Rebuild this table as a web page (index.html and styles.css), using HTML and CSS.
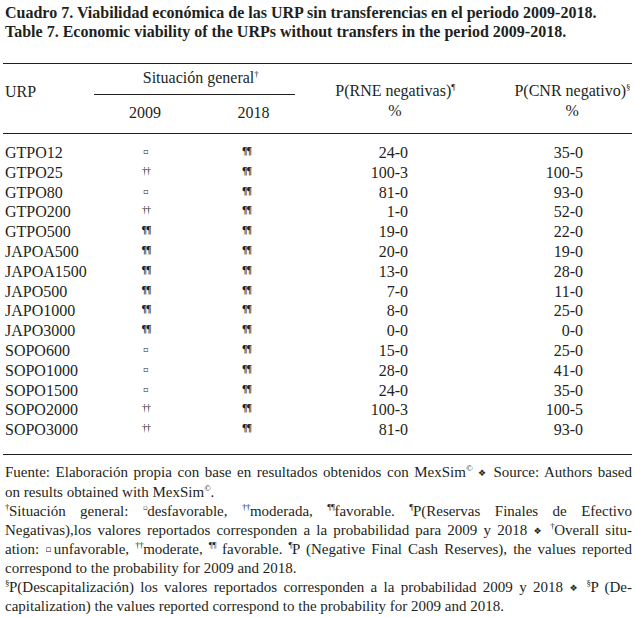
FILE: index.html
```html
<!DOCTYPE html>
<html lang="es">
<head>
<meta charset="utf-8">
<title>Cuadro 7</title>
<link rel="stylesheet" href="styles.css">
</head>
<body>
<div class="page">
  <div class="caption">
    <div>Cuadro 7. Viabilidad económica de las URP sin transferencias en el periodo 2009-2018.</div>
    <div>Table 7. Economic viability of the URPs without transfers in the period 2009-2018.</div>
  </div>

  <table class="data">
    <colgroup>
      <col class="c-urp"><col class="c-y1"><col class="c-y2"><col class="c-rne"><col class="c-cnr">
    </colgroup>
    <thead>
      <tr>
        <th class="h-urp" rowspan="2">URP</th>
        <th class="h-sit" colspan="2"><div class="sit">Situación general<sup class="fn">†</sup></div></th>
        <th class="h-p h-rne" rowspan="2"><div class="pblock"><div>P(RNE negativas)<sup class="fn">¶</sup></div><div class="pct">%</div></div></th>
        <th class="h-p h-cnr" rowspan="2"><div class="pblock"><div>P(CNR negativo)<sup class="fn">§</sup></div><div class="pct">%</div></div></th>
      </tr>
      <tr>
        <th class="h-year">2009</th>
        <th class="h-year">2018</th>
      </tr>
    </thead>
    <tbody>
      <tr><td>GTPO12</td><td class="sym"><span class="sq">▫</span></td><td class="sym"><span class="pil">¶¶</span></td><td class="num n-rne">24-0</td><td class="num n-cnr">35-0</td></tr>
      <tr><td>GTPO25</td><td class="sym"><span class="dag">††</span></td><td class="sym"><span class="pil">¶¶</span></td><td class="num n-rne">100-3</td><td class="num n-cnr">100-5</td></tr>
      <tr><td>GTPO80</td><td class="sym"><span class="sq">▫</span></td><td class="sym"><span class="pil">¶¶</span></td><td class="num n-rne">81-0</td><td class="num n-cnr">93-0</td></tr>
      <tr><td>GTPO200</td><td class="sym"><span class="dag">††</span></td><td class="sym"><span class="pil">¶¶</span></td><td class="num n-rne">1-0</td><td class="num n-cnr">52-0</td></tr>
      <tr><td>GTPO500</td><td class="sym"><span class="pil">¶¶</span></td><td class="sym"><span class="pil">¶¶</span></td><td class="num n-rne">19-0</td><td class="num n-cnr">22-0</td></tr>
      <tr><td>JAPOA500</td><td class="sym"><span class="pil">¶¶</span></td><td class="sym"><span class="pil">¶¶</span></td><td class="num n-rne">20-0</td><td class="num n-cnr">19-0</td></tr>
      <tr><td>JAPOA1500</td><td class="sym"><span class="pil">¶¶</span></td><td class="sym"><span class="pil">¶¶</span></td><td class="num n-rne">13-0</td><td class="num n-cnr">28-0</td></tr>
      <tr><td>JAPO500</td><td class="sym"><span class="pil">¶¶</span></td><td class="sym"><span class="pil">¶¶</span></td><td class="num n-rne">7-0</td><td class="num n-cnr">11-0</td></tr>
      <tr><td>JAPO1000</td><td class="sym"><span class="pil">¶¶</span></td><td class="sym"><span class="pil">¶¶</span></td><td class="num n-rne">8-0</td><td class="num n-cnr">25-0</td></tr>
      <tr><td>JAPO3000</td><td class="sym"><span class="pil">¶¶</span></td><td class="sym"><span class="pil">¶¶</span></td><td class="num n-rne">0-0</td><td class="num n-cnr">0-0</td></tr>
      <tr><td>SOPO600</td><td class="sym"><span class="sq">▫</span></td><td class="sym"><span class="pil">¶¶</span></td><td class="num n-rne">15-0</td><td class="num n-cnr">25-0</td></tr>
      <tr><td>SOPO1000</td><td class="sym"><span class="sq">▫</span></td><td class="sym"><span class="pil">¶¶</span></td><td class="num n-rne">28-0</td><td class="num n-cnr">41-0</td></tr>
      <tr><td>SOPO1500</td><td class="sym"><span class="sq">▫</span></td><td class="sym"><span class="pil">¶¶</span></td><td class="num n-rne">24-0</td><td class="num n-cnr">35-0</td></tr>
      <tr><td>SOPO2000</td><td class="sym"><span class="dag">††</span></td><td class="sym"><span class="pil">¶¶</span></td><td class="num n-rne">100-3</td><td class="num n-cnr">100-5</td></tr>
      <tr class="last"><td>SOPO3000</td><td class="sym"><span class="dag">††</span></td><td class="sym"><span class="pil">¶¶</span></td><td class="num n-rne">81-0</td><td class="num n-cnr">93-0</td></tr>
    </tbody>
  </table>

  <div class="notes">
    <span class="ln j">Fuente: Elaboración propia con base en resultados obtenidos con MexSim<sup class="fn">©</sup> <span class="dia">❖</span> Source: Authors based</span>
    <span class="ln">on results obtained with MexSim<sup class="fn">©</sup>.</span>
    <span class="ln j"><sup class="fn">†</sup>Situación general: <sup class="fn sqf">▫</sup>desfavorable, <sup class="fn">††</sup>moderada, <sup class="fn">¶¶</sup>favorable. <sup class="fn">¶</sup>P(Reservas Finales de Efectivo</span>
    <span class="ln j">Negativas),los valores reportados corresponden a la probabilidad para 2009 y 2018 <span class="dia">❖</span> <sup class="fn">†</sup>Overall situ-</span>
    <span class="ln j">ation: <span class="sqi">▫</span>unfavorable, <sup class="fn">††</sup>moderate, <sup class="fn">¶¶</sup> favorable. <sup class="fn">¶</sup>P (Negative Final Cash Reserves), the values reported</span>
    <span class="ln">correspond to the probability for 2009 and 2018.</span>
    <span class="ln j"><sup class="fn">§</sup>P(Descapitalización) los valores reportados corresponden a la probabilidad 2009 y 2018 <span class="dia">❖</span> <sup class="fn">§</sup>P (De-</span>
    <span class="ln">capitalization) the values reported correspond to the probability for 2009 and 2018.</span>
  </div>
</div>
</body>
</html>
```

FILE: styles.css
```css
html, body {
  margin: 0;
  padding: 0;
  background: #ffffff;
}

body {
  font-family: "Liberation Serif", "Times New Roman", serif;
  color: #231f20;
}

.page {
  width: 629px;
  padding: 3px 3px 0 3px;
}

.caption {
  font-weight: bold;
  font-size: 16px;
  line-height: 19px;
  padding-left: 2px;
}

.data {
  width: 629px;
  margin-top: 22px;
  border-collapse: collapse;
  font-size: 16px;
  table-layout: fixed;
}

.c-urp { width: 91px; }
.c-y1 { width: 102px; }
.c-y2 { width: 115px; }
.c-rne { width: 160px; }
.c-cnr { width: 161px; }

.data thead tr:first-child th {
  border-top: 1.5px solid #231f20;
}

.data thead tr:last-child th {
  border-bottom: 1.5px solid #231f20;
}

.data th {
  font-weight: normal;
  padding: 0;
  line-height: 18px;
}

.h-urp {
  text-align: left;
  vertical-align: top;
  padding: 19px 0 0 2px !important;
  border-bottom: 1.5px solid #231f20;
}

.h-sit {
  vertical-align: top;
  padding: 5px 0 0 0 !important;
}

.sit {
  margin-right: 16px;
  padding: 0 0 7px 12px;
  border-bottom: 1.5px solid #231f20;
}

.h-year {
  padding: 9px 0 11px 0 !important;
  text-align: center;
}

.h-p {
  vertical-align: top;
  padding: 18px 0 0 0 !important;
  border-bottom: 1.5px solid #231f20;
}

.h-rne {
  text-align: center;
  padding-left: 8px !important;
}

.h-cnr {
  text-align: right;
  padding-right: 2px !important;
}

.pblock {
  display: inline-block;
  text-align: center;
}

.pct {
  margin-top: 2px;
}

.fn {
  display: inline-block;
  font-size: 9px;
  vertical-align: 6px;
  line-height: 0;
  letter-spacing: -0.5px;
}

.sqf {
  font-family: "DejaVu Sans", sans-serif;
  font-size: 7px;
}

.data td {
  padding: 0;
  line-height: 19.8px;
  height: 19.8px;
}

.data tbody tr:first-child td {
  padding-top: 9px;
}

.data tbody tr.last td {
  padding-bottom: 14px;
  border-bottom: 1.5px solid #231f20;
}

.data tbody td:first-child {
  padding-left: 2px;
}

.sym {
  text-align: center;
}

.data tbody td.sym:nth-child(3) {
  padding-right: 14px;
}

.data tbody td.sym:nth-child(2) {
  padding-left: 2px;
}

.sq {
  font-family: "DejaVu Sans", sans-serif;
  font-size: 8px;
  vertical-align: 4px;
  line-height: 0;
}

.dag {
  font-size: 10px;
  vertical-align: 4px;
  letter-spacing: -1px;
  line-height: 0;
}

.pil {
  font-size: 10px;
  font-weight: bold;
  vertical-align: 4px;
  letter-spacing: -1px;
  line-height: 0;
}

.num {
  text-align: right;
}

.n-rne {
  padding-right: 63px !important;
}

.n-cnr {
  padding-right: 49px !important;
}

.notes {
  font-size: 15px;
  line-height: 19.1px;
  padding: 8.5px 0 0 2px;
  width: 627px;
}

.ln {
  display: block;
  white-space: nowrap;
}

.ln.j {
  text-align: justify;
  text-align-last: justify;
  white-space: normal;
}

.dia {
  font-family: "DejaVu Sans", sans-serif;
  font-size: 9px;
  vertical-align: 1px;
  line-height: 0;
}

.sqi {
  font-family: "DejaVu Sans", sans-serif;
  font-size: 9px;
  vertical-align: 2px;
  line-height: 0;
}
```
